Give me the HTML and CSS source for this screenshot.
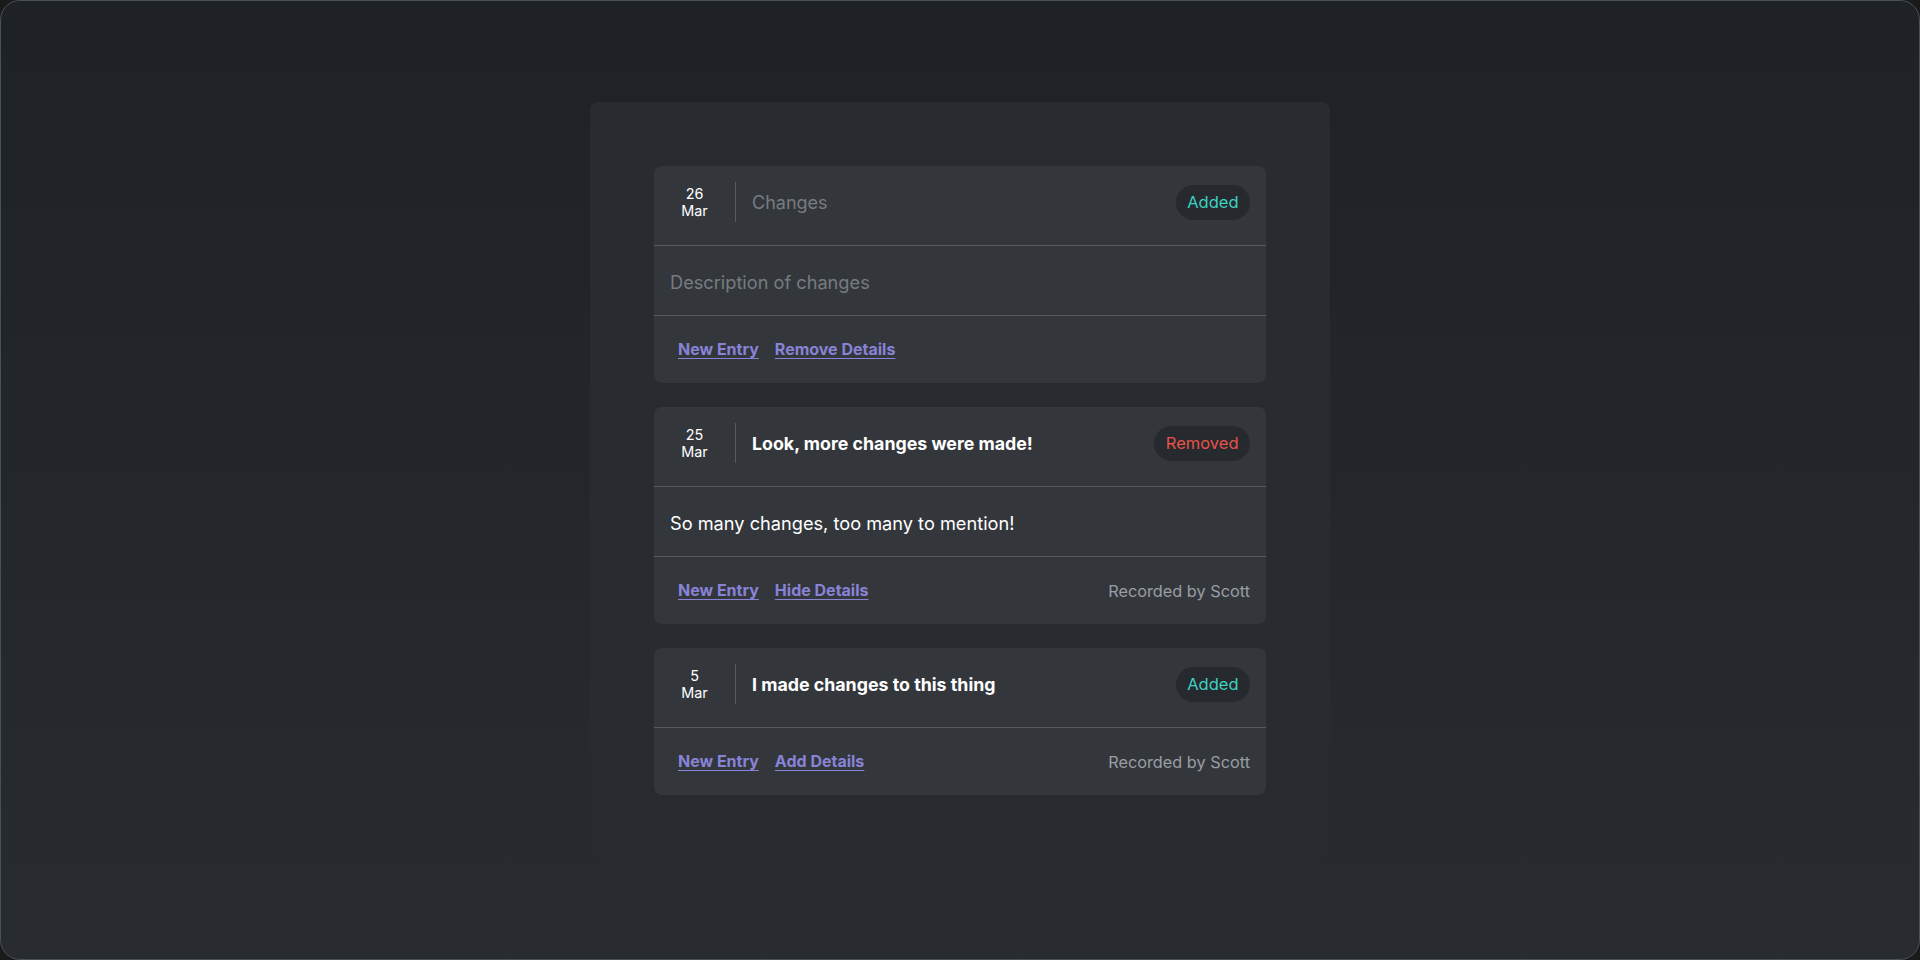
FILE: index.html
```html
<!DOCTYPE html>
<html lang="en">
<head>
<meta charset="utf-8">
<title>Changelog</title>
<link rel="stylesheet" href="styles.css">
</head>
<body>
<div class="frame">
  <main class="panel">
    <article class="card">
      <header class="card-head">
        <div class="date"><span>26</span><span>Mar</span></div>
        <div class="vsep"></div>
        <div class="title placeholder">Changes</div>
        <span class="badge added">Added</span>
      </header>
      <div class="card-body placeholder">Description of changes</div>
      <footer class="card-foot">
        <div class="links"><a href="#" class="link">New Entry</a><a href="#" class="link">Remove Details</a></div>
      </footer>
    </article>
    <article class="card">
      <header class="card-head">
        <div class="date"><span>25</span><span>Mar</span></div>
        <div class="vsep"></div>
        <div class="title">Look, more changes were made!</div>
        <span class="badge removed">Removed</span>
      </header>
      <div class="card-body">So many changes, too many to mention!</div>
      <footer class="card-foot">
        <div class="links"><a href="#" class="link">New Entry</a><a href="#" class="link">Hide Details</a></div>
        <span class="recorded">Recorded by Scott</span>
      </footer>
    </article>
    <article class="card">
      <header class="card-head">
        <div class="date"><span>5</span><span>Mar</span></div>
        <div class="vsep"></div>
        <div class="title">I made changes to this thing</div>
        <span class="badge added">Added</span>
      </header>
      <footer class="card-foot">
        <div class="links"><a href="#" class="link">New Entry</a><a href="#" class="link">Add Details</a></div>
        <span class="recorded">Recorded by Scott</span>
      </footer>
    </article>
  </main>
</div>
</body>
</html>
```
FILE: styles.css
```css
* { box-sizing: border-box; }
html, body { margin: 0; padding: 0; background: #1a1a1a; }
body { font-family: Inter, "Noto Sans", sans-serif; color: #f2f3f5; }

.frame {
  width: 1920px;
  height: 960px;
  border: 1px solid #4b5056;
  border-radius: 20px;
  background: linear-gradient(180deg, #1e2125 0%, #23262b 50%, #282b30 100%);
  overflow: hidden;
  padding-top: 101px;
}

.panel {
  width: 740px;
  margin: 0 auto;
  padding: 64px;
  border-radius: 8px;
  background: linear-gradient(180deg, #282b30 0%, #272a2f 100%);
  display: flex;
  flex-direction: column;
  gap: 24px;
}

.card {
  background: #33373c;
  border-radius: 8px;
}

.card-head {
  display: flex;
  align-items: center;
  padding: 16px 16px 23px 16px;
  border-bottom: 1px solid #575b61;
}

.date {
  width: 49px;
  display: flex;
  flex-direction: column;
  align-items: center;
  font-size: 14.4px;
  line-height: 17px;
  color: #ffffff;
}

.vsep {
  width: 1px;
  height: 40px;
  background: #575b61;
  margin: 0 16px;
}

.title {
  flex: 1;
  font-size: 17.8px;
  font-weight: 700;
  color: #ffffff;
}

.title.placeholder { font-size: 18px; }
.placeholder { color: #777b81 !important; font-weight: 400 !important; }

.badge {
  height: 35px;
  line-height: 35px;
  padding: 0 11.5px;
  border-radius: 999px;
  background: #26292d;
  font-size: 16.5px;
}
.badge.added { color: #3fd1c1; }
.badge.removed { color: #e5534b; }

.card-body {
  padding: 18px 16px 14px;
  line-height: 37px;
  font-size: 18.2px;
  color: #ffffff;
  border-bottom: 1px solid #575b61;
}

.card-foot {
  display: flex;
  align-items: center;
  justify-content: space-between;
  padding: 16px;
}

.links { display: flex; }

.link {
  padding: 8px;
  font-size: 16px;
  line-height: 19px;
  font-weight: 700;
  color: #8883d6;
  text-decoration: underline;
  text-underline-offset: 3px;
  text-decoration-thickness: 1px;
}

.recorded {
  font-size: 16.3px;
  color: #9a9da3;
}
```
